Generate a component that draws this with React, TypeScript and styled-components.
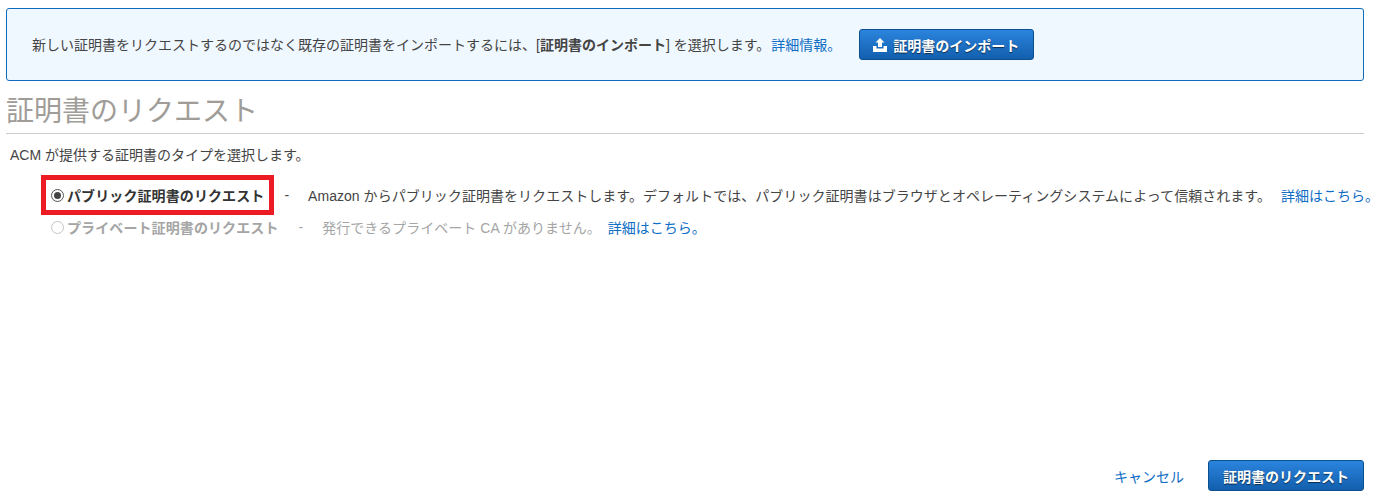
import React from "react";
import styled, { createGlobalStyle } from "styled-components";

const GlobalStyle = createGlobalStyle`
  html, body { margin: 0; padding: 0; background: #ffffff; }
  body {
    font-family: "Liberation Sans", "Noto Sans CJK JP", sans-serif;
    font-size: 14px;
    color: #444444;
  }
`;

const Page = styled.div`
  width: 1377px;
  height: 500px;
  box-sizing: border-box;
  padding: 8px 13px 0 6px;
  display: flex;
  flex-direction: column;
  overflow: hidden;
`;

const Banner = styled.div`
  height: 73px;
  box-sizing: border-box;
  border: 1px solid #0f6cbd;
  border-radius: 3px;
  background: #f0f8ff;
  padding: 0 0 0 25px;
  display: flex;
  align-items: center;
  gap: 18px;
  white-space: nowrap;
`;

const BannerText = styled.span`
  margin-bottom: 2px;
`;

const Link = styled.a`
  color: #0e6dc4;
  text-decoration: none;
`;

const BannerLink = styled(Link)`
  margin-left: 1px;
`;

const Button = styled.button<{ $width: number }>`
  width: ${(p) => p.$width}px;
  height: 31px;
  box-sizing: border-box;
  border: 1px solid #0b4f8f;
  border-radius: 3px;
  background: linear-gradient(#2b84dd, #125fae);
  color: #ffffff;
  font: bold 14px "Liberation Sans", "Noto Sans CJK JP", sans-serif;
  text-shadow: 0 1px 1px rgba(0, 0, 0, 0.6);
  display: flex;
  align-items: center;
  justify-content: center;
  gap: 5px;
  padding: 0;
`;

const Heading = styled.h1`
  margin: 0;
  height: 53px;
  box-sizing: border-box;
  padding: 14px 0 0 0;
  border-bottom: 1px solid #cccccc;
  font-size: 28px;
  line-height: 34px;
  font-weight: 400;
  color: #a09c98;
`;

const Intro = styled.p`
  margin: 11px 0 0 4px;
  line-height: 20px;
`;

const Options = styled.div`
  margin: 20px 0 0 45px;
  display: flex;
  flex-direction: column;
  gap: 12px;
`;

const OptionRow = styled.div<{ $disabled?: boolean }>`
  display: flex;
  align-items: center;
  height: 20px;
  white-space: nowrap;
  color: ${(p) => (p.$disabled ? "#a5a5a5" : "#444444")};
`;

const OptionLabel = styled.span<{ $marked?: boolean }>`
  display: flex;
  align-items: center;
  gap: 3px;
  font-weight: bold;
  letter-spacing: 0.1px;
  color: ${(p) => (p.$marked ? "#333333" : "inherit")};
  padding: 5px;
  margin: -5px;
  ${(p) => (p.$marked ? "outline: 5px solid #ed1c24; outline-offset: 0;" : "")}
`;

const Radio = styled.span<{ $checked?: boolean }>`
  width: 13px;
  height: 13px;
  box-sizing: border-box;
  border-radius: 50%;
  border: 1px solid ${(p) => (p.$checked ? "#555555" : "#c4c4c4")};
  background: #ffffff;
  display: flex;
  align-items: center;
  justify-content: center;
  &::after {
    content: "";
    display: ${(p) => (p.$checked ? "block" : "none")};
    width: 7px;
    height: 7px;
    border-radius: 50%;
    background: #444444;
  }
`;

const Dash = styled.span`
  margin: 0 19px 0 20px;
`;

const Description = styled.span<{ $gapRight: number }>`
  margin-right: ${(p) => p.$gapRight}px;
  letter-spacing: 0.04px;
`;

const Footer = styled.div`
  margin-top: auto;
  margin-bottom: 9px;
  display: flex;
  justify-content: flex-end;
  align-items: center;
  gap: 24px;
`;

const ButtonIcon = styled.svg`
  margin-left: -2px;
`;

const UploadIcon = () => (
  <ButtonIcon width="16" height="14" viewBox="0 0 16 14" fill="#ffffff">
    <path d="M8 0 L12.5 4.6 H10 V9 H6 V4.6 H3.5 Z" />
    <path d="M1 8 H4.5 V10.5 H11.5 V8 H15 V14 H1 Z" />
  </ButtonIcon>
);

export default function App() {
  return (
    <Page>
      <GlobalStyle />
      <Banner>
        <BannerText>
          新しい証明書をリクエストするのではなく既存の証明書をインポートするには、[<b>証明書のインポート</b>] を選択します。
          <BannerLink href="#">詳細情報。</BannerLink>
        </BannerText>
        <Button $width={175}>
          <UploadIcon />
          証明書のインポート
        </Button>
      </Banner>
      <Heading>証明書のリクエスト</Heading>
      <Intro>ACM が提供する証明書のタイプを選択します。</Intro>
      <Options>
        <OptionRow>
          <OptionLabel $marked>
            <Radio $checked />
            パブリック証明書のリクエスト
          </OptionLabel>
          <Dash>-</Dash>
          <Description $gapRight={10}>
            Amazon からパブリック証明書をリクエストします。デフォルトでは、パブリック証明書はブラウザとオペレーティングシステムによって信頼されます。
          </Description>
          <Link href="#">詳細はこちら。</Link>
        </OptionRow>
        <OptionRow $disabled>
          <OptionLabel>
            <Radio />
            プライベート証明書のリクエスト
          </OptionLabel>
          <Dash>-</Dash>
          <Description $gapRight={7}>発行できるプライベート CA がありません。</Description>
          <Link href="#">詳細はこちら。</Link>
        </OptionRow>
      </Options>
      <Footer>
        <Link href="#">キャンセル</Link>
        <Button $width={156}>証明書のリクエスト</Button>
      </Footer>
    </Page>
  );
}
